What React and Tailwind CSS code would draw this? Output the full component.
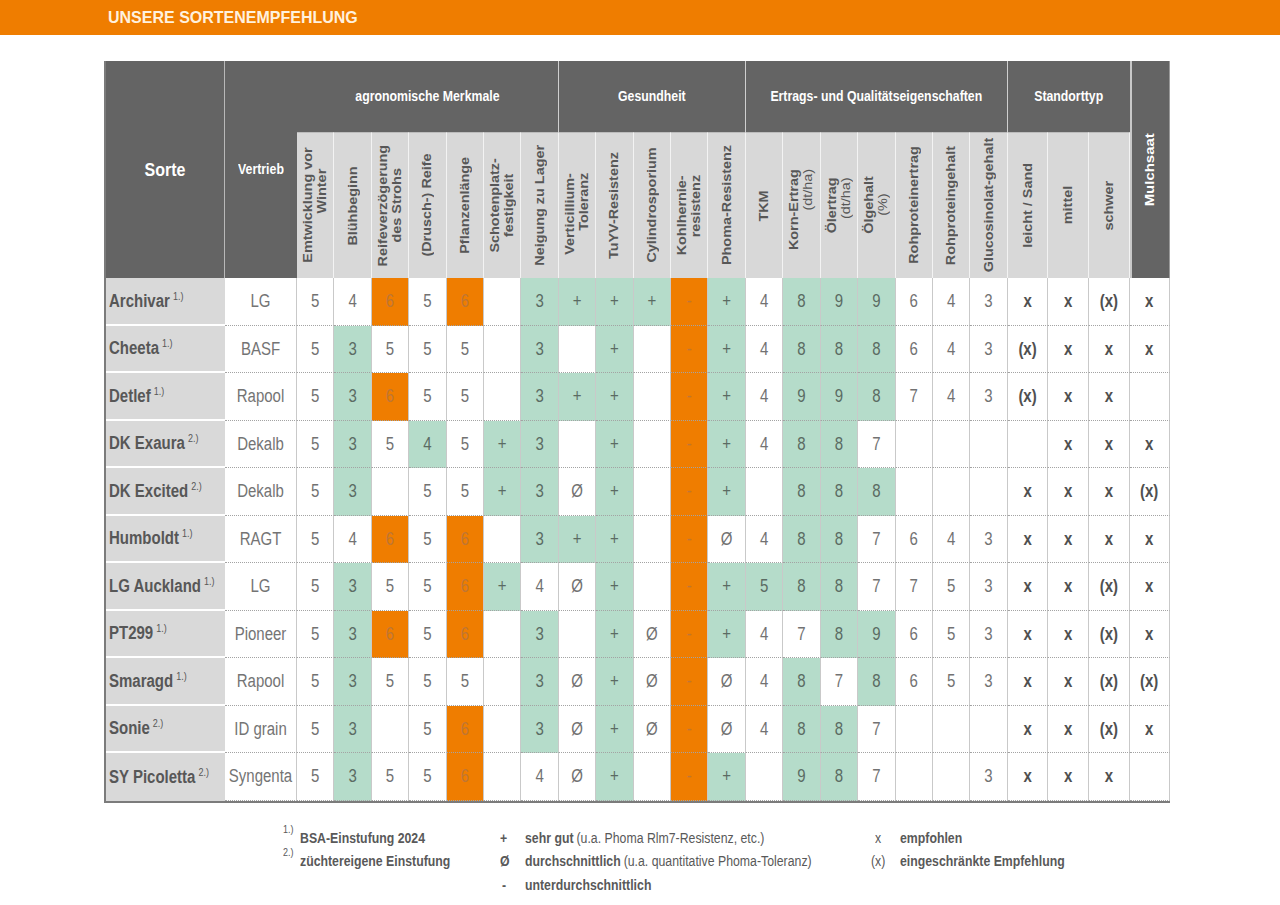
import React from "react";

const rows = [
  ["Archivar", "1.)", "LG", ["5","4","6o","5","6o","","3g","+g","+g","+g","-o","+g","4","8g","9g","9g","6","4","3","x","x","(x)","x"]],
  ["Cheeta", "1.)", "BASF", ["5","3g","5","5","5","","3g","","+g","","-o","+g","4","8g","8g","8g","6","4","3","(x)","x","x","x"]],
  ["Detlef", "1.)", "Rapool", ["5","3g","6o","5","5","","3g","+g","+g","","-o","+g","4","9g","9g","8g","7","4","3","(x)","x","x",""]],
  ["DK Exaura", "2.)", "Dekalb", ["5","3g","5","4g","5","+g","3g","","+g","","-o","+g","4","8g","8g","7","","","","","x","x","x"]],
  ["DK Excited", "2.)", "Dekalb", ["5","3g","","5","5","+g","3g","Ø","+g","","-o","+g","","8g","8g","8g","","","","x","x","x","(x)"]],
  ["Humboldt", "1.)", "RAGT", ["5","4","6o","5","6o","","3g","+g","+g","","-o","Ø","4","8g","8g","7","6","4","3","x","x","x","x"]],
  ["LG Auckland", "1.)", "LG", ["5","3g","5","5","6o","+g","4","Ø","+g","","-o","+g","5g","8g","8g","7","7","5","3","x","x","(x)","x"]],
  ["PT299", "1.)", "Pioneer", ["5","3g","6o","5","6o","","3g","","+g","Ø","-o","+g","4","7","8g","9g","6","5","3","x","x","(x)","x"]],
  ["Smaragd", "1.)", "Rapool", ["5","3g","5","5","5","","3g","Ø","+g","Ø","-o","Ø","4","8g","7","8g","6","5","3","x","x","(x)","(x)"]],
  ["Sonie", "2.)", "ID grain", ["5","3g","","5","6o","","3g","Ø","+g","Ø","-o","Ø","4","8g","8g","7","","","","x","x","(x)","x"]],
  ["SY Picoletta", "2.)", "Syngenta", ["5","3g","5","5","6o","","4","Ø","+g","","-o","+g","","9g","8g","7","","","3","x","x","x",""]],
];

const subs = [
  { lines: [["Emtwicklung vor", ""], ["Winter", "text-end pe-[18px]"]] },
  { lines: [["Blühbeginn", ""]] },
  { lines: [["Reifeverzögerung", ""], ["des Strohs", ""]] },
  { lines: [["(Drusch-) Reife", ""]] },
  { lines: [["Pflanzenlänge", ""]] },
  { lines: [["Schotenplatz-", ""], ["festigkeit", ""]] },
  { lines: [["Neigung zu Lager", ""]] },
  { lines: [["Verticillium-", ""], ["Toleranz", "text-end"]], shift: "translate-y-[9px]" },
  { lines: [["TuYV-Resistenz", ""]] },
  { lines: [["Cylindrosporium", ""]] },
  { lines: [["Kohlhernie-", ""], ["resistenz", "text-end"]], shift: "translate-y-[10px]" },
  { lines: [["Phoma-Resistenz", ""]] },
  { lines: [["TKM", ""]] },
  { lines: [["Korn-Ertrag", ""], ["(dt/ha)", "text-end font-normal"]], shift: "translate-y-[4px]" },
  { lines: [["Ölertrag", ""], ["(dt/ha)", "text-end font-normal"]] },
  { lines: [["Ölgehalt", ""], ["(%)", "font-normal"]] },
  { lines: [["Rohproteinertrag", ""]] },
  { lines: [["Rohproteingehalt", ""]] },
  { lines: [["Glucosinolat-gehalt", ""]] },
  { lines: [["leicht / Sand", ""]] },
  { lines: [["mittel", ""]] },
  { lines: [["schwer", ""]] },
];

function SubHead({ lines, shift = "" }) {
  return (
    <div className="bg-[#d8d8d8] border-r border-r-[#f3f3f3] border-t border-t-[#bcbcbc] flex items-center justify-center overflow-hidden">
      <div
        className={`[writing-mode:vertical-rl] rotate-180 scale-y-[1.2] ${shift} text-center font-bold text-[12px] leading-[14px] text-[#575757] whitespace-nowrap`}
      >
        {lines.map(([t, cls], i) => (
          <div key={i} className={cls}>
            {t}
          </div>
        ))}
      </div>
    </div>
  );
}

function Cell({ v }) {
  let c = "w";
  let t = v;
  const last = v.slice(-1);
  if (v.length > 1 && (last === "g" || last === "o")) {
    c = last;
    t = v.slice(0, -1);
  }
  const bg = c === "g" ? "bg-[#b5dcca]" : c === "o" ? "bg-[#ef7d00]" : "bg-white";
  const isX = t === "x" || t === "(x)";
  const tc =
    c === "o"
      ? "text-[#bf7634]"
      : c === "g"
      ? "text-[#5b6b63]"
      : isX
      ? "text-[#505050] font-bold"
      : "text-[#727272]";
  return (
    <div
      className={`${bg} border-r border-r-[#c9c9c9] border-b border-b-[#a3a3a3] [border-bottom-style:dotted] flex items-center justify-center`}
    >
      <span className={`inline-block scale-y-[1.2] text-[15px] ${tc}`}>{t}</span>
    </div>
  );
}

function GroupHead({ span, children, border = true }) {
  return (
    <div
      className={`${span} bg-[#646464] ${border ? "border-r border-r-[#cfcfcf]" : ""} flex items-center justify-center`}
    >
      <span className="inline-block scale-y-[1.2] text-[12.3px] font-bold text-white whitespace-nowrap">
        {children}
      </span>
    </div>
  );
}

function LegRow({ children }) {
  return (
    <div className="h-[23.5px] flex items-center whitespace-nowrap">
      <div className="inline-flex items-center scale-y-[1.2]">{children}</div>
    </div>
  );
}

export default function App() {
  return (
    <div className="w-[1280px] h-[905px] bg-white font-['Liberation_Sans',Arial,sans-serif] overflow-hidden">
      <div className="h-[35px] bg-[#ef7d00] flex items-center pl-[108px]">
        <span className="inline-block scale-y-[1.08] text-[16px] font-bold text-[#fff1de]">
          UNSERE SORTENEMPFEHLUNG
        </span>
      </div>

      <div className="pl-[104px] pt-[26px]">
        <div className="grid w-[1066px] grid-cols-[119px_72px_repeat(19,37.42px)_repeat(3,40.67px)_40px] grid-rows-[71px_146px_repeat(11,47.55px)] border-l-2 border-b-2 border-[#7b7b7b]">
          <div className="row-span-2 bg-[#646464] border-r border-r-[#b8b8b8] flex items-center justify-center">
            <span className="inline-block scale-y-[1.2] text-[16px] font-bold text-white">Sorte</span>
          </div>
          <div className="row-span-2 bg-[#646464] flex items-center justify-center">
            <span className="inline-block scale-y-[1.2] text-[12.3px] font-bold text-white">Vertrieb</span>
          </div>
          <GroupHead span="col-span-7">agronomische Merkmale</GroupHead>
          <GroupHead span="col-span-5">Gesundheit</GroupHead>
          <GroupHead span="col-span-7">Ertrags- und Qualitätseigenschaften</GroupHead>
          <GroupHead span="col-span-3" border={false}>Standorttyp</GroupHead>
          <div className="row-span-2 bg-[#646464] border-l-2 border-l-[#c8c8c8] border-r border-r-[#9a9a9a] flex items-center justify-center">
            <div className="[writing-mode:vertical-rl] rotate-180 scale-y-[1.15] text-[13px] font-bold text-white">
              Mulchsaat
            </div>
          </div>
          {subs.map((s, i) => (
            <SubHead key={i} lines={s.lines} shift={s.shift} />
          ))}

          {rows.map(([name, sup, vertrieb, vals], ri) => (
            <React.Fragment key={ri}>
              <div
                className={`bg-[#d9d9d9] ${ri < rows.length - 1 ? "border-b-2 border-b-white" : ""} flex items-center pl-[3px]`}
              >
                <span className="inline-block scale-y-[1.2] origin-left text-[15px] font-bold text-[#575757] whitespace-nowrap">
                  {name}
                  <sup className="text-[9px] font-normal ml-[3px] -top-[6px]">{sup}</sup>
                </span>
              </div>
              <div className="bg-white border-r border-r-[#c9c9c9] border-b border-b-[#a3a3a3] [border-bottom-style:dotted] flex items-center justify-center">
                <span className="inline-block scale-y-[1.2] text-[15px] text-[#747474] whitespace-nowrap">
                  {vertrieb}
                </span>
              </div>
              {vals.map((v, ci) => (
                <Cell key={ci} v={v} />
              ))}
            </React.Fragment>
          ))}
        </div>
      </div>

      <div className="flex pl-[283px] mt-[23px] text-[12.3px] text-[#595959]">
        <div className="w-[217px]">
          <LegRow>
            <span className="text-[9px] self-start -mt-[4px] w-[17px]">1.)</span>
            <span className="font-bold">BSA-Einstufung 2024</span>
          </LegRow>
          <LegRow>
            <span className="text-[9px] self-start -mt-[4px] w-[17px]">2.)</span>
            <span className="font-bold">züchtereigene Einstufung</span>
          </LegRow>
        </div>
        <div className="w-[371px]">
          <LegRow>
            <span className="w-[25px] font-bold">+</span>
            <span className="font-bold">sehr gut</span>
            <span className="ml-[3px]">(u.a. Phoma Rlm7-Resistenz, etc.)</span>
          </LegRow>
          <LegRow>
            <span className="w-[25px] font-bold">Ø</span>
            <span className="font-bold">durchschnittlich</span>
            <span className="ml-[3px]">(u.a. quantitative Phoma-Toleranz)</span>
          </LegRow>
          <LegRow>
            <span className="w-[25px] pl-[2px] font-bold">-</span>
            <span className="font-bold">unterdurchschnittlich</span>
          </LegRow>
        </div>
        <div>
          <LegRow>
            <span className="w-[29px] pl-[4px]">x</span>
            <span className="font-bold">empfohlen</span>
          </LegRow>
          <LegRow>
            <span className="w-[29px]">(x)</span>
            <span className="font-bold">eingeschränkte Empfehlung</span>
          </LegRow>
        </div>
      </div>
    </div>
  );
}
